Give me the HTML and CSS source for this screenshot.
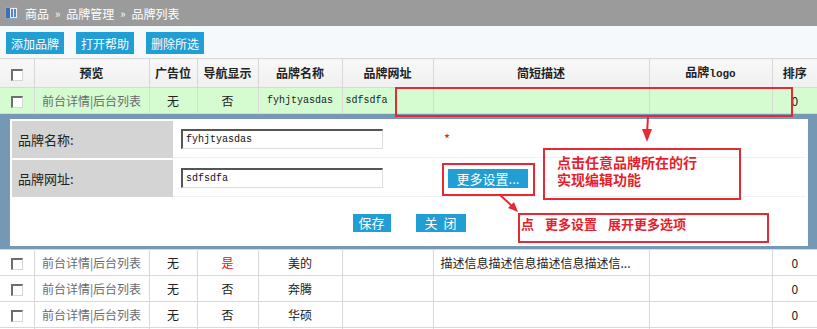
FILE: index.html
```html
<!DOCTYPE html>
<html>
<head>
<meta charset="utf-8">
<title>品牌列表</title>
<link rel="stylesheet" href="styles.css">
</head>
<body>
<div class="page">
  <div class="crumb">
    <svg class="crumb-icon" width="13" height="12" viewBox="0 0 13 12">
      <rect x="0.5" y="0.5" width="12" height="11" fill="#e6eef8" stroke="#8aa6cc"/>
      <rect x="1" y="1" width="4" height="10" fill="#3d6fb8"/>
      <rect x="6" y="2" width="2" height="8" fill="#5b86c4"/>
      <rect x="9" y="2" width="2" height="8" fill="#5b86c4"/>
    </svg>
    <span>商品</span><span class="sep">»</span><span>品牌管理</span><span class="sep">»</span><span>品牌列表</span>
  </div>
  <div class="toolbar">
    <button class="btn">添加品牌</button>
    <button class="btn">打开帮助</button>
    <button class="btn">删除所选</button>
  </div>
  <table class="grid">
    <colgroup>
      <col class="c-cb"><col class="c-pre"><col class="c-ad"><col class="c-nav"><col class="c-name"><col class="c-url"><col class="c-desc"><col class="c-logo"><col class="c-sort">
    </colgroup>
    <thead>
      <tr>
        <th><span class="cb"></span></th>
        <th>预览</th>
        <th>广告位</th>
        <th>导航显示</th>
        <th>品牌名称</th>
        <th>品牌网址</th>
        <th>简短描述</th>
        <th>品牌<span class="mono-b">logo</span></th>
        <th>排序</th>
      </tr>
    </thead>
    <tbody>
      <tr class="sel">
        <td><span class="cb"></span></td>
        <td class="links">前台详情|后台列表</td>
        <td>无</td>
        <td>否</td>
        <td class="mono">fyhjtyasdas</td>
        <td class="mono left">sdfsdfa</td>
        <td></td>
        <td></td>
        <td>0</td>
      </tr>
      <tr class="edit">
        <td colspan="9">
          <div class="panel">
            <div class="sheet">
              <div class="frow">
                <div class="flabel">品牌名称:</div>
                <div class="fval"><input class="inp" type="text" value="fyhjtyasdas"></div>
                <div class="fextra star">*</div>
              </div>
              <div class="frow">
                <div class="flabel">品牌网址:</div>
                <div class="fval"><input class="inp" type="text" value="sdfsdfa"></div>
                <div class="fextra more"><button class="btn-more">更多设置...</button></div>
              </div>
              <div class="factions">
                <button class="btn-sm save">保存</button>
                <button class="btn-sm close">关&nbsp;&nbsp;闭</button>
              </div>
            </div>
          </div>
        </td>
      </tr>
      <tr>
        <td><span class="cb"></span></td>
        <td class="links">前台详情|后台列表</td>
        <td>无</td>
        <td class="yes">是</td>
        <td>美的</td>
        <td></td>
        <td class="left desc">描述信息描述信息描述信息描述信...</td>
        <td></td>
        <td>0</td>
      </tr>
      <tr>
        <td><span class="cb"></span></td>
        <td class="links">前台详情|后台列表</td>
        <td>无</td>
        <td>否</td>
        <td>奔腾</td>
        <td></td>
        <td></td>
        <td></td>
        <td>0</td>
      </tr>
      <tr>
        <td><span class="cb"></span></td>
        <td class="links">前台详情|后台列表</td>
        <td>无</td>
        <td>否</td>
        <td>华硕</td>
        <td></td>
        <td></td>
        <td></td>
        <td>0</td>
      </tr>
      <tr>
        <td></td><td></td><td></td><td></td><td></td><td></td><td></td><td></td><td></td>
      </tr>
    </tbody>
  </table>

  <div class="note note-row"></div>
  <div class="note note-edit"><div>点击任意品牌所在的行</div><div>实现编辑功能</div></div>
  <div class="note note-more"></div>
  <div class="note note-expand"><span>点</span><span class="gap">更多设置</span><span class="gap">展开更多选项</span></div>
  <svg class="arrows" width="817" height="329" viewBox="0 0 817 329">
    <line x1="648" y1="116" x2="647" y2="134" stroke="#e52a36" stroke-width="2"/>
    <polygon points="642,129 652,129 647,142" fill="#e52a36"/>
    <line x1="500" y1="195" x2="513" y2="207" stroke="#e52a36" stroke-width="2"/>
    <polygon points="518,212 508,208 514,202" fill="#e52a36"/>
  </svg>
</div>
</body>
</html>
```

FILE: styles.css
```css
* {
  box-sizing: border-box;
}

body {
  margin: 0;
  font-family: "Noto Sans CJK SC", "Liberation Sans", sans-serif;
  font-size: 12px;
  color: #333;
  background: #fff;
}

.page {
  position: relative;
  width: 817px;
  height: 329px;
  overflow: hidden;
}

.crumb {
  height: 26px;
  background: #9b9b9b;
  color: #fff;
  display: flex;
  align-items: center;
  padding-left: 5px;
  font-size: 12px;
}

.crumb-icon {
  margin-right: 7px;
}

.sep {
  margin: 0 6px;
  font-size: 11px;
}

.toolbar {
  height: 32px;
  background: #f6f9fb;
  display: flex;
  align-items: flex-start;
  gap: 12px;
  padding: 6px 0 0 6px;
}

.btn {
  background: #219ed4;
  color: #fff;
  border: 0;
  height: 22px;
  padding: 0 5px;
  margin: 0;
  font: 12px "Noto Sans CJK SC", sans-serif;
}

.grid {
  width: 817px;
  border-collapse: collapse;
  table-layout: fixed;
}

.c-cb { width: 34px; }
.c-pre { width: 115px; }
.c-ad { width: 48px; }
.c-nav { width: 61px; }
.c-name { width: 84px; }
.c-url { width: 91px; }
.c-desc { width: 216px; }
.c-logo { width: 123px; }
.c-sort { width: 45px; }

.grid th,
.grid td {
  border: 1px solid #d9d9d9;
  text-align: center;
  vertical-align: middle;
  padding: 0;
  overflow: hidden;
  white-space: nowrap;
  line-height: 16px;
}

.grid th:first-child,
.grid td:first-child {
  border-left: 0;
}

.grid th:last-child,
.grid td:last-child {
  border-right: 0;
}

.grid th {
  height: 29px;
  background: linear-gradient(#f8f8f8, #f0f0f0);
  font-weight: bold;
  color: #222;
}

.grid td {
  height: 26px;
  color: #222;
}

.mono-b {
  font-family: "Liberation Mono", monospace;
  font-size: 11px;
  font-weight: bold;
}

.cb {
  display: inline-block;
  width: 12px;
  height: 12px;
  background: #fff;
  border-top: 2px solid #6e6e6e;
  border-left: 2px solid #6e6e6e;
  border-right: 1px solid #d6d6d6;
  border-bottom: 1px solid #d6d6d6;
  vertical-align: middle;
}

.grid td.links {
  color: #6a6a6a;
}

.grid td.mono {
  font-family: "Liberation Mono", monospace;
  font-size: 10px;
}

.grid td.left {
  text-align: left;
  padding-left: 3px;
}

.grid td.desc {
  padding-left: 7px;
  color: #222;
}

.grid td.yes {
  color: #e0161e;
}

.grid tr.sel td {
  background: #d5fbd1;
}

.grid tr.edit td {
  padding: 0;
  height: auto;
  border-left: 0;
  border-right: 0;
}

.panel {
  background: #7599b5;
  padding: 5px 9px 3px 10px;
}

.sheet {
  background: #fff;
  height: 127px;
  padding: 2px 2px 0;
}

.frow {
  display: grid;
  grid-template-columns: 161px 267px 1fr;
  height: 37px;
  margin-bottom: 2px;
}

.flabel {
  background: #d4d4d4;
  display: flex;
  align-items: center;
  padding-left: 6px;
  font-size: 13px;
  color: #222;
}

.fval,
.fextra {
  display: flex;
  align-items: center;
  border-bottom: 1px solid #f1f1f1;
}

.fval {
  padding-left: 8px;
}

.star {
  padding-left: 4px;
  color: #e0161e;
  font-size: 13px;
}

.more {
  padding-left: 8px;
}

.inp {
  width: 202px;
  height: 20px;
  margin: 0;
  padding: 0 3px;
  border-top: 2px solid #555;
  border-left: 2px solid #555;
  border-right: 1px solid #dcdcdc;
  border-bottom: 1px solid #dcdcdc;
  font-family: "Liberation Mono", monospace;
  font-size: 10px;
  color: #111;
  background: #fff;
}

.btn-more {
  width: 80px;
  height: 19px;
  margin: 0;
  padding: 0;
  border: 0;
  background: #219ed4;
  color: #fff;
  font: 13px "Noto Sans CJK SC", sans-serif;
  line-height: 19px;
}

.factions {
  display: flex;
  justify-content: center;
  gap: 25px;
  padding-top: 15px;
}

.btn-sm {
  height: 18px;
  margin: 0;
  padding: 0;
  border: 0;
  background: #219ed4;
  color: #fff;
  font: 13px "Noto Sans CJK SC", sans-serif;
  line-height: 18px;
}

.save {
  width: 38px;
}

.close {
  width: 50px;
}

.note {
  position: absolute;
  border: 2px solid #e52a36;
  color: #e61e2d;
  font-weight: bold;
}

.note-row {
  left: 395px;
  top: 87px;
  width: 398px;
  height: 30px;
}

.note-edit {
  left: 543px;
  top: 148px;
  width: 198px;
  height: 52px;
  padding: 4px 0 0 12px;
  font-size: 14px;
  line-height: 17px;
  display: flex;
  flex-direction: column;
}

.note-more {
  left: 442px;
  top: 163px;
  width: 93px;
  height: 33px;
}

.note-expand {
  left: 518px;
  top: 213px;
  width: 251px;
  height: 30px;
  padding: 1px 0 0 1px;
  font-size: 13px;
  line-height: 16px;
}

.note-expand .gap {
  margin-left: 11px;
}

.arrows {
  position: absolute;
  left: 0;
  top: 0;
  pointer-events: none;
}
```
